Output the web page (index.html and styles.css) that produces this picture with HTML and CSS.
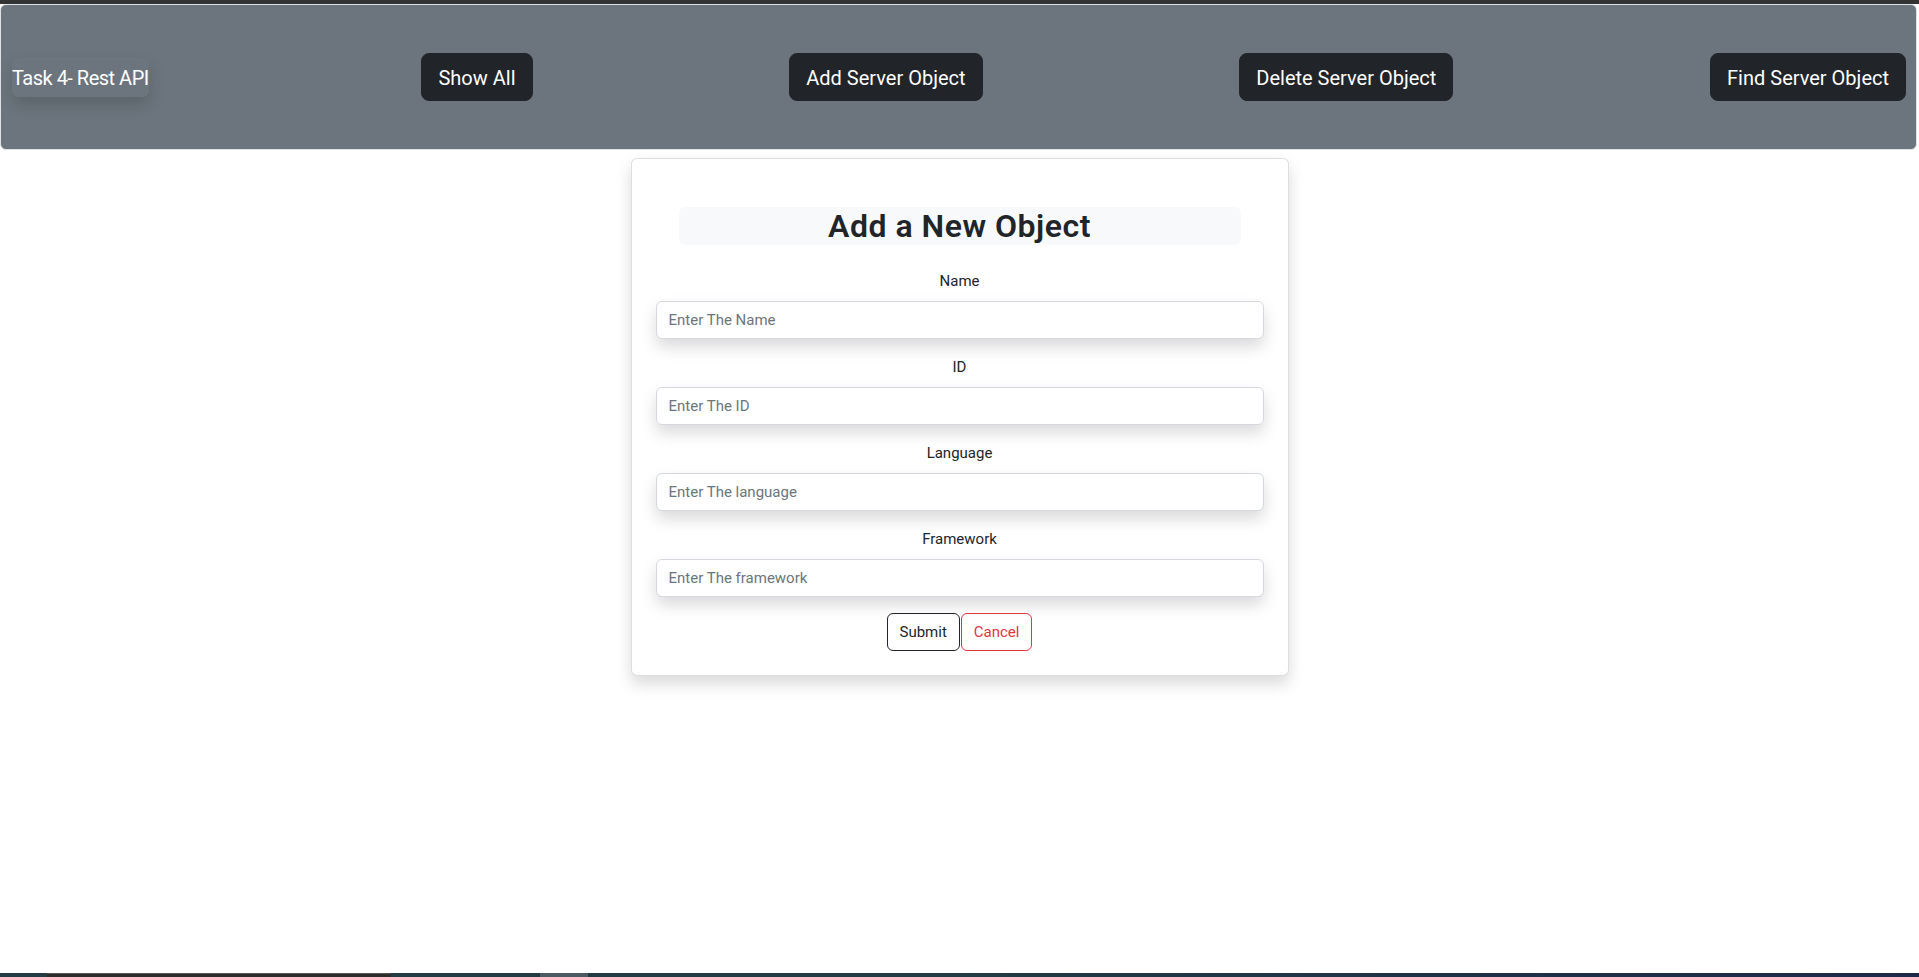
FILE: index.html
```html
<!DOCTYPE html>
<html lang="en">
<head>
<meta charset="utf-8">
<title>Task 4- Rest API</title>
<link rel="stylesheet" href="styles.css">
</head>
<body>
  <div class="top-strip"></div>
  <nav class="navbar">
    <span class="brand">Task 4- Rest API</span>
    <button class="btn btn-dark">Show All</button>
    <button class="btn btn-dark">Add Server Object</button>
    <button class="btn btn-dark">Delete Server Object</button>
    <button class="btn btn-dark">Find Server Object</button>
  </nav>

  <main class="content">
    <form class="card">
      <h2 class="title">Add a New Object</h2>
      <div class="field">
        <label class="label" for="name">Name</label>
        <input class="input" id="name" type="text" placeholder="Enter The Name">
      </div>
      <div class="field">
        <label class="label" for="id">ID</label>
        <input class="input" id="id" type="text" placeholder="Enter The ID">
      </div>
      <div class="field">
        <label class="label" for="language">Language</label>
        <input class="input" id="language" type="text" placeholder="Enter The language">
      </div>
      <div class="field">
        <label class="label" for="framework">Framework</label>
        <input class="input" id="framework" type="text" placeholder="Enter The framework">
      </div>
      <div class="actions">
        <button type="button" class="obtn obtn-dark">Submit</button>
        <button type="button" class="obtn obtn-danger">Cancel</button>
      </div>
    </form>
  </main>

  <div class="taskbar">
    <div class="tb-seg tb-teal tb-a"></div>
    <div class="tb-seg tb-dark tb-b"></div>
    <div class="tb-seg tb-teal tb-c"></div>
    <div class="tb-seg tb-light tb-d"></div>
    <div class="tb-seg tb-teal tb-e"></div>
    <div class="tb-seg tb-grad"></div>
  </div>
</body>
</html>
```

FILE: styles.css
```css
* {
  box-sizing: border-box;
}

html, body {
  margin: 0;
  padding: 0;
}

body {
  min-height: 100vh;
  display: flex;
  flex-direction: column;
  background: #ffffff;
  font-family: Roboto, "Noto Sans", "Liberation Sans", sans-serif;
  color: #212529;
}

.top-strip {
  height: 4px;
  background: #333333;
  flex: none;
}

.navbar {
  flex: none;
  height: 146px;
  margin-right: 2px;
  display: flex;
  align-items: center;
  justify-content: space-between;
  padding: 0 10px 0 11px;
  background: #6c757d;
  border: 1px solid #dee2e6;
  border-radius: 6px;
}

.brand {
  display: inline-block;
  margin-right: 16px;
  padding: 6px 0 4px;
  font-size: 20px;
  line-height: 30px;
  letter-spacing: -0.5px;
  color: #ffffff;
  background: #6c757d;
  border-radius: 6px;
  box-shadow: 0 8px 16px rgba(0, 0, 0, 0.15);
  white-space: nowrap;
}

.btn {
  font-family: inherit;
  font-size: 20px;
  line-height: 30px;
  padding: 9px 16px 7px;
  border-radius: 8px;
  border: 1px solid transparent;
  cursor: pointer;
  white-space: nowrap;
}

.btn-dark {
  background: #212529;
  border-color: #212529;
  color: #ffffff;
}

.content {
  flex: 1;
  display: flex;
  justify-content: center;
  align-items: flex-start;
}

.card {
  width: 658px;
  margin-top: 8px;
  padding: 24px;
  background: #ffffff;
  border: 1px solid rgba(0, 0, 0, 0.13);
  border-radius: 6px;
  box-shadow: 0 8px 16px rgba(0, 0, 0, 0.15);
}

.title {
  margin: 24px 23px 24px;
  padding-top: 1px;
  background: #f8f9fa;
  border-radius: 6px;
  font-size: 32px;
  line-height: 37px;
  font-weight: 600;
  letter-spacing: 0.5px;
  text-align: center;
  color: #212529;
}

.field {
  display: flex;
  flex-direction: column;
  margin-bottom: 16px;
}

.label {
  text-align: center;
  font-size: 15px;
  line-height: 24px;
  margin-bottom: 8px;
  color: #212529;
}

.input {
  width: 100%;
  height: 38px;
  padding: 6px 12px;
  font-family: inherit;
  font-size: 15px;
  line-height: 24px;
  color: #212529;
  background: #ffffff;
  border: 1px solid #d5d9de;
  border-radius: 6px;
  box-shadow: 0 8px 16px rgba(0, 0, 0, 0.15);
  outline: none;
}

.input::placeholder {
  color: #6c757d;
  opacity: 1;
}

.actions {
  display: flex;
  justify-content: center;
  gap: 1px;
}

.obtn {
  font-family: inherit;
  font-size: 15px;
  line-height: 24px;
  padding: 6px 12px;
  border-radius: 6px;
  background: transparent;
  cursor: pointer;
}

.obtn-dark {
  border: 1px solid #212529;
  color: #212529;
}

.obtn-danger {
  border: 1px solid #dc3545;
  color: #dc3545;
}

.taskbar {
  flex: none;
  height: 4px;
  display: flex;
}

.tb-teal {
  background: #233a42;
}

.tb-dark {
  background: #2c2c2c;
  border-top: 1px solid #555555;
}

.tb-light {
  background: #4a5a60;
}

.tb-a { width: 47px; }
.tb-b { width: 344px; }
.tb-c { width: 149px; }
.tb-d { width: 48px; }
.tb-e { width: 372px; }

.tb-grad {
  flex: 1;
  background: linear-gradient(to right, #223a43, #1c2a48);
}
```
